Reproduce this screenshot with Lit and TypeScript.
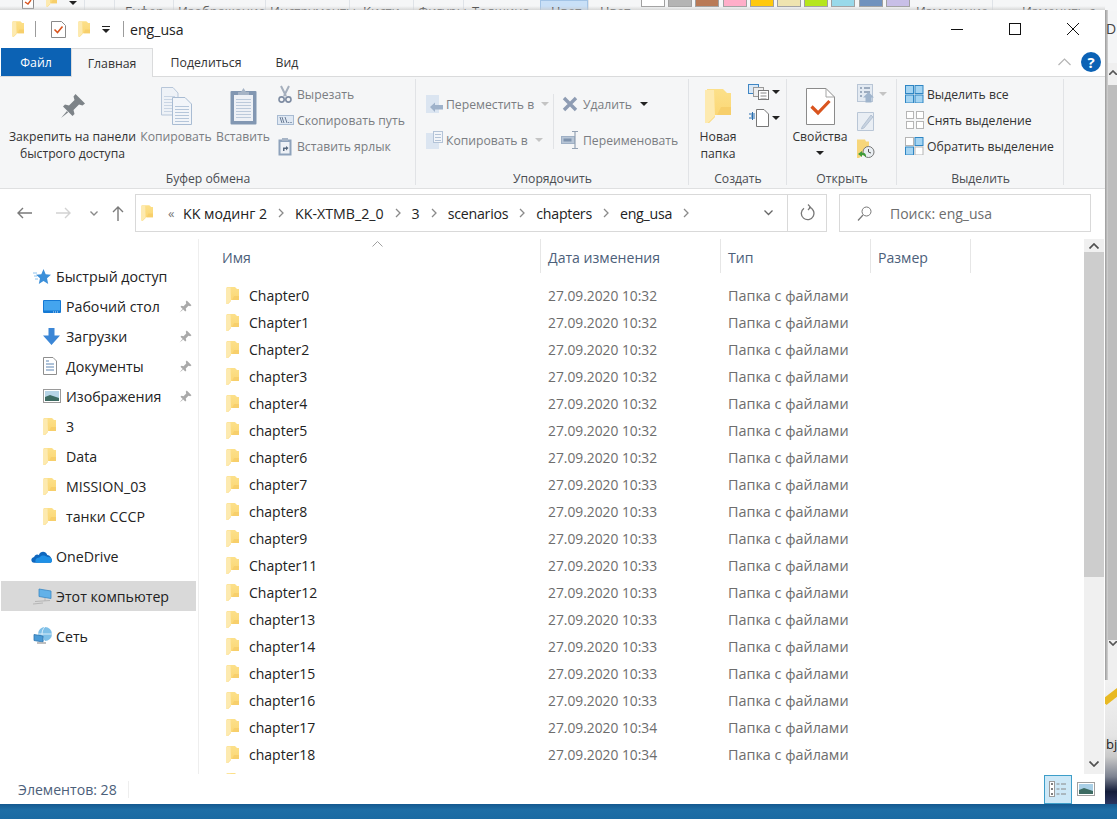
import { LitElement, html, css, svg } from 'lit';
import { customElement } from 'lit/decorators.js';

const names = [
  'Chapter0', 'Chapter1', 'Chapter2', 'chapter3', 'chapter4', 'chapter5', 'chapter6',
  'chapter7', 'chapter8', 'chapter9', 'Chapter11', 'Chapter12', 'chapter13', 'chapter14',
  'chapter15', 'chapter16', 'chapter17', 'chapter18', 'chapter19',
];
const stamp = (i: number) => `27.09.2020 10:${i < 7 ? 32 : i < 16 ? 33 : 34}`;

const swatches = ['#ffffff', '#b4b4b4', '#b97a57', '#ffaec9', '#ffc90e', '#efe4b0', '#b5e61d', '#99d9ea', '#7092be', '#c8bfe7'];
const behind = [
  ['Буфер', 125], ['Изображение', 178], ['Инструменты', 270], ['Кисти', 363], ['Фигуры', 418],
  ['Толщина', 472], ['Цвет', 551], ['Цвет', 600], ['Изменение', 916], ['Изменить с', 1022],
] as [string, number][];

const icon = (w: number, h: number, body: unknown, vb = `0 0 ${w} ${h}`) =>
  html`<svg width=${w} height=${h} viewBox=${vb} fill="none">${body}</svg>`;

const folder = (w = 13, h = 17) => icon(w, h, svg`
  <path d="M1 0H9L11 2H13V13H5V14L2 17H1Z" fill="url(#fold)"/>
  <path d="M0 0.5H4.5L5 13.5L1.5 17H0Z" fill="#fdeab0"/>
  <path d="M8 9H13V13H6Z" fill="#f7cf6b"/>`, '0 0 13 17');

const pin = (w = 26, c = '#7d8388') => icon(w, w, svg`
  <path d="M15.5 1L25 10.5L22.5 12.5L19 11.5L13.5 17L14.5 21L12.5 23L3 13.5L5 11.5L9 12.5L14.5 7L13.5 3.5Z" fill=${c}/>
  <path d="M7 18L1 25L8 19.5Z" fill=${c}/>`, '0 0 26 26');

const chev = (w: number, h: number, d: string, c: string, sw = 1.3) =>
  icon(w, h, svg`<path d=${d} stroke=${c} stroke-width=${sw}/>`);
const crumbSep = chev(6, 10, 'M1 1L5 5L1 9', '#8a8a8a');
const caret = (c = '#222') => icon(8, 4, svg`<path d="M0 0H8L4 4Z" fill=${c}/>`);

const sheetLines = (x: number, y: number, w: number, n: number, c: string) =>
  Array.from({ length: n }, (_, i) => svg`<path d="M${x} ${y + i * 3 + 0.5}H${x + w}" stroke=${c}/>`);

const copyBig = icon(31, 38, svg`
  <path d="M.5.5H12L17 6V28H.5Z" fill="#eef2f7" stroke="#b7c6d9"/>
  ${sheetLines(3, 9, 11, 6, '#c9d5e4')}
  <path d="M11.5 10.5H24L30.5 17V37.5H11.5Z" fill="#f2f5f9" stroke="#a9bcd3"/>
  ${sheetLines(14, 19, 14, 6, '#b5c6da')}`);
const pasteBig = icon(27, 38, svg`
  <rect x=".5" y="4" width="26" height="33.5" rx="1" fill="#8297b2"/>
  <rect x="4" y="8" width="19" height="26" fill="#eef1f6"/>
  ${sheetLines(6, 12, 15, 7, '#bccadb')}
  <path d="M8 8V5H11L13.5 1L16 5H19V8Z" fill="#a6b4c6"/>`);
const scissors = icon(14, 19, svg`
  <path d="M3 1L8 11M11 1L6 11" stroke="#a5afbd" stroke-width="2"/>
  <circle cx="3.6" cy="14.5" r="2.6" stroke="#7f8da3" stroke-width="1.6"/>
  <circle cx="10.4" cy="14.5" r="2.6" stroke="#7f8da3" stroke-width="1.6"/>`);
const copyPath = icon(17, 10, svg`
  <rect x=".5" y=".5" width="16" height="9" fill="#dfe8f3" stroke="#a8bbd2"/>
  <path d="M3 2L5 8M5 2L7 8M8 2L10 8" stroke="#5c6f8a" stroke-width=".9"/>
  <path d="M11 7.5H11.8M12.8 7.5H13.6M14.4 7.5H15" stroke="#5c6f8a"/>`);
const pasteLink = icon(14, 19, svg`
  <rect x=".5" y="2.5" width="13" height="16" fill="#8ea2bb"/>
  <rect x="2.5" y="5" width="9" height="11.5" fill="#eef1f6"/>
  <path d="M4 1H10V4H4Z" fill="#a6b4c6"/>
  <path d="M5 14V10.5H8V9L10.5 11L8 13.5V12H6.5V14Z" fill="#56687f"/>`);
const moveTo = icon(17, 18, svg`
  <rect width="13" height="18" fill="#dbe5f1"/>
  <path d="M4 12L9 7.5V10H17V14.5H9V17Z" fill="#9fb2ca"/>`);
const copyTo = icon(17, 18, svg`
  <rect y="2" width="13" height="16" fill="#dbe5f1"/>
  <rect x="7.5" y=".5" width="9" height="11" fill="#f2f5f9" stroke="#b3c3d7"/>
  ${sheetLines(9, 3, 6, 3, '#b3c3d7')}`);
const del = icon(16, 16, svg`<path d="M2 2L14 14M14 2L2 14" stroke="#8e9cb3" stroke-width="3.4"/>`);
const rename = icon(18, 18, svg`
  <rect x=".5" y="5.5" width="13" height="7" fill="#b7c5d6" stroke="#9fb0c5"/>
  <rect x="2.5" y="7.5" width="8" height="3" fill="#7f93ad"/>
  <path d="M11 .5H17M14 .5V17.5M11 17.5H17" stroke="#94a2b4" stroke-width="1.2"/>`);
const newItem = icon(22, 16, svg`
  <rect x=".5" y=".5" width="10" height="9" fill="#d9e8f6" stroke="#3f86c4"/>
  <rect x="5.5" y="3.5" width="10" height="9" fill="#eee" stroke="#9a9a9a"/>
  <rect x="10.5" y="6.5" width="10" height="9" fill="#fff" stroke="#777"/>
  ${sheetLines(12.5, 8.5, 6, 3, '#888')}`);
const easyAccess = icon(22, 18, svg`
  <path d="M8.5 .5H16L20.5 5V17.5H8.5Z" fill="#fff" stroke="#777"/>
  <path d="M1 5H7M3 7H7M1 9H7" stroke="#2a6fb0" stroke-width="1.1"/>
  <path d="M4.5 3V11" stroke="#2a6fb0"/>`);
const propsBig = icon(29, 37, svg`
  <path d="M.5.5H20L28.5 9V36.5H.5Z" fill="#fff" stroke="#8b8b8b"/>
  <path d="M20 .5V9H28.5" stroke="#a5a5a5"/>
  <path d="M5.5 18.5L12 25L23.5 13" stroke="#d9541e" stroke-width="3.2"/>`);
const openIcon = icon(17, 19, svg`
  <rect x=".5" y=".5" width="15" height="17" fill="#e3eaf2" stroke="#b9c6d6"/>
  <path d="M3 4H5M7 4H13M3 8H5M7 8H13M3 12H5" stroke="#8798ae" stroke-width="1.6"/>
  <path d="M11.5 8L17 13.5H14.5V18.5H8.5V13.5H6Z" fill="#9fb4cc"/>`);
const editIcon = icon(17, 19, svg`
  <path d="M.5.5H16.5V18.5H.5Z" fill="#e9eef4" stroke="#b9c6d6"/>
  <path d="M5 15L4.5 17L7 16L16 5L14 3Z" fill="#c7d3e1" stroke="#a5b5c8" stroke-width=".7"/>`);
const history = icon(18, 19, svg`
  <path d="M0 .5H8L9 2.5H12V14H6V16L2 19H0Z" fill="#f7d67a"/>
  <circle cx="11.5" cy="13" r="5.5" fill="#e9eef2" stroke="#777"/>
  <path d="M11.5 10V13L14 14" stroke="#555"/>
  <path d="M5 12L1 15L5 18V16C7 16 8 17 9 18.5C9.5 15 8 13.5 5 13.8Z" fill="#3f9b3a"/>`);

const squares = (on: boolean[], big = false) => {
  const s = big ? 8 : 7;
  const g = big ? 1.5 : 3;
  const w = s * 2 + g;
  return icon(w + 1, w + 1, [0, 1, 2, 3].map((i) => {
    const x = (i % 2) * (s + g) + 0.5;
    const y = (i > 1 ? 1 : 0) * (s + g) + 0.5;
    return svg`<rect x=${x} y=${y} width=${s} height=${s} fill=${on[i] ? '#a4d4f2' : '#fff'} stroke=${on[i] ? '#2f86c4' : '#b5b5b5'}/>`;
  }));
};

const navStar = icon(18, 17, svg`
  <path d="M10.5 1L12.7 6.2L18 6.7L14 10.3L15.2 16L10.5 13L5.8 16L7 10.3L3 6.7L8.3 6.2Z" fill="#3b8fd9"/>
  <path d="M0 5H4M1 8H4M2 11H5" stroke="#8cc2ee"/>`);
const navDesktop = icon(18, 13, svg`
  <rect width="18" height="13" rx="1" fill="#1579d4"/>
  <rect x="1" y="1" width="16" height="9.5" fill="#44a5ee"/>
  <path d="M10 12H16" stroke="#cfe6f8" stroke-dasharray="1 1"/>`);
const navDown = icon(17, 17, svg`<path d="M5.5 0H11.5V7.5H17L8.5 17L0 7.5H5.5Z" fill="#3b86d6"/>`);
const navDoc = icon(14, 18, svg`
  <path d="M.5.5H10L13.5 4V17.5H.5Z" fill="#fff" stroke="#8e8e8e"/>
  <path d="M3 4H6M3 7H11M3 10H11M3 13H11" stroke="#5f86b3"/>`);
const navPic = icon(18, 14, svg`
  <rect x=".5" y=".5" width="17" height="13" fill="#fff" stroke="#9a9a9a"/>
  <rect x="2" y="2" width="14" height="10" fill="#b6d4e6"/>
  <path d="M2 8L7 6L16 9V12H2Z" fill="#3d6b62"/>`);
const navCloud = icon(21, 14, svg`
  <path d="M3 13C0 13 -1 8.5 3 7.5C3.5 5 6 4.5 7.5 5.5C9 1.5 14 1.5 15.5 5.5C18 5.5 20 9 20 10.5C20 12 19 13 18 13Z" fill="#0f67be"/>
  <path d="M5 13C3 11 5 8 8 8C9.5 5.5 13 5.5 15.5 7.5C18 7 20 9 20 10.5C20 12 19 13 18 13Z" fill="#1e90e6"/>`, '0 0 20 13');
const navPc = icon(20, 17, svg`
  <path d="M6 1L18 3V10.5L6 8.5Z" fill="#62b1e8" stroke="#3a88c4" stroke-width=".8"/>
  <path d="M12 10V13M2 13.5L17 12.5M0 16L10 15" stroke="#b5b5b5"/>`);
const navNet = icon(20, 19, svg`
  <circle cx="12" cy="7" r="7" fill="#7fc0e8"/>
  <path d="M12 0C8 3 8 11 12 14M5 7H19" stroke="#dbeefa"/>
  <path d="M1 7.5L10 9V15L1 13.5Z" fill="#4a9ad6" stroke="#2f75ad" stroke-width=".8"/>
  <path d="M4 16H13" stroke="#a5a5a5" stroke-width="1.4"/>`);

const places: [unknown, string, boolean][] = [
  [navDesktop, 'Рабочий стол', true],
  [navDown, 'Загрузки', true],
  [navDoc, 'Документы', true],
  [navPic, 'Изображения', true],
  [folder(), '3', false],
  [folder(), 'Data', false],
  [folder(), 'MISSION_03', false],
  [folder(), 'танки СССР', false],
];

@customElement('app-root')
export class AppRoot extends LitElement {
  static styles = css`
    :host {
      display: block;
      position: relative;
      width: 1117px;
      height: 819px;
      overflow: hidden;
      background: #f4f5f6;
      font-family: 'Open Sans', 'Noto Sans', sans-serif;
      color: #1e1e1e;
    }
    svg { display: block; flex: none; }

    /* desktop behind the window */
    .paint-top { position: absolute; left: 0; top: 0; width: 1117px; height: 11px; overflow: hidden; background: #f5f6f7; }
    .paint-label { position: absolute; top: 3px; font-size: 13px; line-height: 16px; color: #333; white-space: nowrap; }
    .paint-active { position: absolute; left: 540px; top: 0; width: 48px; height: 11px; background: #c9e0f7; border: 1px solid #a3c4e6; box-sizing: border-box; }
    .swatch { position: absolute; top: -1px; width: 24px; height: 8px; border: 1px solid #a0a0a0; box-sizing: border-box; }
    .paint-tick { position: absolute; top: 0; width: 1px; height: 11px; background: #dfe3e8; }
    .behind-doc { position: absolute; left: 22px; top: -5px; }
    .behind-folder { position: absolute; left: 46px; top: -8px; }
    .behind-caret { position: absolute; left: 69px; top: 1px; }
    .shadow-top { position: absolute; left: 0; top: 6px; width: 1105px; height: 4px; background: linear-gradient(#f5f6f700, #c9c9c9aa); }
    .shadow-right { position: absolute; left: 1105px; top: 10px; width: 3px; height: 794px; background: linear-gradient(90deg, #9a9a9a, #d4d4d4); }
    .back-letter { position: absolute; left: 1106px; top: 20px; font-size: 14px; line-height: 18px; color: #444; }
    .back-bar { position: absolute; left: 1108px; top: 63px; width: 9px; height: 617px; background: #efefef; }
    .back-thumb { position: absolute; left: 0; top: 22px; width: 9px; height: 555px; background: #bdbdbd; }
    .back-up { position: absolute; left: 1px; top: 7px; }
    .back-down { position: absolute; left: 1px; top: 578px; }
    .back-photo { position: absolute; left: 1105px; top: 680px; width: 12px; height: 124px; background: linear-gradient(#f2f2f2 0, #e4e4e4 45%, #c9c9c9 62%, #7c8290 78%, #141d3a 90%, #2a3560 100%); overflow: hidden; }
    .pencil { position: absolute; left: -3px; top: 12px; width: 22px; height: 7px; background: #e8b923; transform: rotate(-38deg); }
    .back-text { position: absolute; left: 1px; top: 56px; font-size: 13px; line-height: 16px; color: #222; }
    .taskbar { position: absolute; left: 0; top: 804px; width: 1117px; height: 15px; background: linear-gradient(#15598f, #1e6ea6 40%, #1b6aa3); }

    .window { position: absolute; left: 0; top: 10px; width: 1105px; height: 794px; background: #fff; display: flex; flex-direction: column; }

    .titlebar { height: 38px; display: flex; align-items: center; flex: none; }
    .tb-first { margin-left: 12px; }
    .tb-sep { width: 1px; height: 16px; background: #9c9c9c; }
    .tb-sep.a { margin: 0 15px 0 11px; }
    .tb-sep.b { margin: 0 7px 0 13px; }
    .tb-folder { margin-left: 12px; }
    .tb-caret { margin-left: 12px; display: flex; flex-direction: column; gap: 2px; }
    .tb-dash { width: 8px; height: 1px; background: #222; }
    .title { font-size: 14.1px; color: #222; flex: 1; margin-left: -1px; }
    .win-btn { width: 58px; height: 38px; display: flex; align-items: center; justify-content: center; }
    .win-btns { display: flex; margin-right: 3px; }

    .tabs { height: 28px; display: flex; flex: none; font-size: 12.3px; position: relative; }
    .tab { display: flex; align-items: center; justify-content: center; color: #333; box-sizing: border-box; }
    .tab.file { width: 70px; margin-left: 1px; background: #0c62b4; color: #fff; }
    .tab.home { width: 82px; height: 29px; background: #f5f6f7; border: 1px solid #dadbdc; border-bottom: none; position: relative; z-index: 1; }
    .tab.share { width: 106px; }
    .tab.view { width: 56px; }
    .tab-tools { margin-left: auto; display: flex; align-items: center; gap: 10px; margin-right: 4px; }
    .help { width: 20px; height: 20px; border-radius: 50%; background: #0b62b5; color: #fff; font-size: 15px; font-weight: 700; display: flex; align-items: center; justify-content: center; line-height: 1; }

    .ribbon { height: 113px; flex: none; box-sizing: border-box; background: #f5f6f7; border-top: 1px solid #dadbdc; border-bottom: 1px solid #dfe0e1; display: flex; font-size: 12.2px; color: #7a7d82; }
    .group { display: flex; flex-direction: column; box-sizing: border-box; position: relative; }
    .group::after { content: ''; position: absolute; right: 0; top: 2px; bottom: 3px; width: 1px; background: #e1e3e6; }
    .g-clip { width: 416px; }
    .g-org { width: 273px; }
    .g-new { width: 98px; }
    .g-open { width: 110px; }
    .g-sel { width: 167px; }
    .g-body { flex: 1; display: flex; min-height: 0; }
    .g-label { height: 22px; line-height: 26px; text-align: center; color: #4a4d52; flex: none; }
    .big { display: flex; flex-direction: column; align-items: center; padding-top: 7px; text-align: center; line-height: 17px; white-space: nowrap; }
    .big-icon { height: 44px; display: flex; align-items: center; justify-content: center; }
    .dark { color: #333; }
    .small-col { display: flex; flex-direction: column; padding-top: 4px; }
    .small { height: 26px; display: flex; align-items: center; white-space: nowrap; }
    .small .ic { width: 21px; display: flex; justify-content: center; flex: none; }

    .g-clip .g-body { padding-left: 10px; }
    .b-pin { width: 125px; }
    .b-copy { width: 72px; margin-left: 5px; }
    .b-paste { width: 52px; margin-left: 5px; }
    .g-clip .small-col { margin-left: 7px; }
    .g-clip .small .ic { width: 18px; margin-right: 3px; }

    .g-org .g-body { padding-left: 10px; }
    .org-col { display: flex; flex-direction: column; padding-top: 9px; }
    .org-col .small { height: 36px; gap: 3px; }
    .org-a { width: 127px; }
    .org-a .caret { margin-left: 4px; }
    .org-div { width: 1px; height: 55px; background: #e1e3e6; margin-top: 17px; }
    .org-b { margin-left: 8px; }
    .org-b .small { gap: 5px; }
    .org-b .caret { margin-left: 3px; }
    .rename-ic { margin-right: -1px; margin-left: -1px; }

    .g-new .g-body { padding-left: 3px; }
    .b-new { width: 52px; color: #333; }
    .new-col { margin-left: 4px; display: flex; flex-direction: column; padding-top: 2px; }
    .new-row { height: 26px; display: flex; align-items: center; gap: 2px; }
    .g-open .g-body { padding-left: 5px; }
    .b-props { width: 56px; color: #333; }
    .b-props .caret { margin-top: 6px; }
    .open-col { margin-left: 9px; padding-top: 3px; display: flex; flex-direction: column; }
    .open-row { height: 27.5px; display: flex; align-items: center; gap: 5px; }
    .g-sel .small-col { padding-left: 8px; }
    .g-sel .small { color: #333; }
    .g-sel .small .ic { width: 19px; margin-right: 3px; }

    .address { height: 50px; flex: none; display: flex; align-items: flex-start; padding-top: 5px; box-sizing: border-box; }
    .nav { width: 135px; height: 38px; display: flex; align-items: center; flex: none; }
    .nav-back { margin-left: 17px; }
    .nav-fwd { margin-left: 24px; }
    .nav-more { margin-left: 19px; }
    .nav-up { margin-left: 14px; }
    .path { width: 692px; height: 38px; box-sizing: border-box; border: 1px solid #d9d9d9; display: flex; align-items: center; flex: none; font-size: 14.2px; color: #222; }
    .path-folder { margin-left: 5px; }
    .path-more { margin-left: 15px; width: 15px; color: #777; font-size: 13px; line-height: 14px; }
    .crumb { white-space: nowrap; }
    .crumb.tight { letter-spacing: -0.25px; }
    .crumb-sep { width: 28px; display: flex; justify-content: center; flex: none; }
    .path-drop { margin-left: auto; width: 38px; display: flex; justify-content: center; }
    .path-refresh { width: 38px; height: 36px; border-left: 1px solid #d9d9d9; display: flex; align-items: center; justify-content: center; }
    .search { margin-left: 12px; width: 252px; height: 38px; box-sizing: border-box; border: 1px solid #d9d9d9; display: flex; align-items: center; font-size: 14px; color: #6d6d6d; }
    .search svg { margin-left: 17px; margin-right: 18px; }

    .main { flex: 1; display: flex; min-height: 0; }
    .side { width: 199px; flex: none; box-sizing: border-box; border-right: 1px solid #eeeeee; padding-top: 22px; font-size: 14.2px; color: #222; }
    .place { height: 30px; display: flex; align-items: center; margin-left: 1px; width: 195px; }
    .place .ic { width: 55px; padding-left: 32px; box-sizing: border-box; display: flex; flex: none; }
    .place.sub .ic { width: 65px; padding-left: 42px; }
    .place .ic.cloud { padding-left: 30px; }
    .place .txt { flex: 1; }
    .place.gap { margin-top: 10px; }
    .place.sel { background: #d9d9d9; }
    .place .pin { margin-right: 4px; }

    .files { flex: 1; min-width: 0; overflow: hidden; }
    .head { height: 34px; display: flex; padding-left: 15px; font-size: 14.1px; color: #4c607a; position: relative; }
    .hcell { box-sizing: border-box; border-right: 1px solid #e6e6e6; display: flex; align-items: center; padding-left: 7px; padding-top: 2px; }
    .hcell.n { width: 327px; padding-left: 8px; }
    .hcell.d { width: 180px; }
    .hcell.t { width: 150px; }
    .hcell.s { width: 100px; }
    .sort { position: absolute; left: 173px; top: 2px; }
    .rows { padding-top: 9px; font-size: 14px; }
    .row { height: 27px; display: grid; grid-template-columns: 23px 299px 180px 1fr; align-items: center; padding-left: 27px; }
    .row .name { color: #222; }
    .row .date { color: #6d6d6d; font-size: 13.8px; }
    .row .type { color: #6d6d6d; font-size: 14.4px; }

    .scroll { width: 20px; margin-right: 1px; flex: none; background: #f0f0f0; display: flex; flex-direction: column; }
    .sc-btn { height: 13px; display: flex; align-items: center; justify-content: center; flex: none; }
    .sc-btn.down { height: 20px; margin-top: auto; }
    .thumb { height: 325px; background: #cdcdcd; flex: none; }

    .status { height: 30px; flex: none; display: flex; align-items: center; font-size: 14.1px; color: #4c607a; padding-left: 18px; }
    .st-sep { width: 1px; height: 17px; background: #eeeeee; margin-left: 11px; }
    .views { margin-left: auto; display: flex; margin-right: 5px; align-items: center; }
    .view { width: 28px; height: 29px; box-sizing: border-box; display: flex; align-items: center; justify-content: center; }
    .view.on { background: #cde8f7; border: 1px solid #3d9ec9; }
  `;

  private paintBehind() {
    return html`
      <div class="paint-top">
        <div class="behind-doc">${icon(12, 14, svg`<rect x=".5" y=".5" width="11" height="13" fill="#fff" stroke="#888"/><path d="M3 7L6 9L9 5" stroke="#d9541e" stroke-width="1.4"/>`)}</div>
        <div class="behind-folder">${folder(11, 15)}</div>
        <div class="behind-caret">${caret()}</div>
        <div class="paint-tick" style="left:84px"></div>
        <div class="paint-active"></div>
        ${[114, 173, 265, 349, 413, 463, 588, 992].map((x) => html`<div class="paint-tick" style="left:${x}px"></div>`)}
        ${behind.map(([t, x]) => html`<div class="paint-label" style="left:${x}px">${t}</div>`)}
        ${swatches.map((c, i) => html`<div class="swatch" style="left:${641 + i * 27.2}px;background:${c}"></div>`)}
      </div>
      <div class="shadow-top"></div>
      <div class="shadow-right"></div>
      <div class="back-letter">D</div>
      <div class="back-bar">
        <div class="back-up">${chev(8, 5, 'M0 5L4 1L8 5', '#555', 1.6)}</div>
        <div class="back-thumb"></div>
        <div class="back-down">${chev(8, 5, 'M0 0L4 4L8 0', '#555', 1.6)}</div>
      </div>
      <div class="back-photo"><div class="pencil"></div><div class="back-text">bj</div></div>
      <div class="taskbar"></div>
    `;
  }

  private titlebar() {
    return html`
      <div class="titlebar">
        <div class="tb-first">${folder(12, 16)}</div>
        <div class="tb-sep a"></div>
        ${icon(15, 17, svg`<path d="M.5.5H10.5L14.5 4.5V16.5H.5Z" fill="#fff" stroke="#8a8a8a"/><path d="M3.5 8.5L6.5 11.5L11.5 5.5" stroke="#d9541e" stroke-width="1.6"/>`)}
        <div class="tb-folder">${folder(12, 16)}</div>
        <div class="tb-caret"><div class="tb-dash"></div>${caret()}</div>
        <div class="tb-sep b"></div>
        <div class="title">eng_usa</div>
        <div class="win-btns">
          <div class="win-btn">${icon(12, 1, svg`<path d="M0 .5H12" stroke="#111"/>`)}</div>
          <div class="win-btn">${icon(12, 12, svg`<rect x=".5" y=".5" width="11" height="11" stroke="#111"/>`)}</div>
          <div class="win-btn">${icon(12, 12, svg`<path d="M0 0L12 12M12 0L0 12" stroke="#111"/>`)}</div>
        </div>
      </div>
    `;
  }

  private tabs() {
    return html`
      <div class="tabs">
        <div class="tab file">Файл</div>
        <div class="tab home">Главная</div>
        <div class="tab share">Поделиться</div>
        <div class="tab view">Вид</div>
        <div class="tab-tools">
          ${chev(13, 8, 'M.5 7L6.5 1L12.5 7', '#b4b4b4', 1.2)}
          <div class="help">?</div>
        </div>
      </div>
    `;
  }

  private ribbon() {
    return html`
      <div class="ribbon">
        <div class="group g-clip">
          <div class="g-body">
            <div class="big b-pin dark"><div class="big-icon">${pin()}</div>Закрепить на панели<br />быстрого доступа</div>
            <div class="big b-copy"><div class="big-icon">${copyBig}</div>Копировать</div>
            <div class="big b-paste"><div class="big-icon">${pasteBig}</div>Вставить</div>
            <div class="small-col">
              <div class="small"><span class="ic">${scissors}</span>Вырезать</div>
              <div class="small"><span class="ic">${copyPath}</span>Скопировать путь</div>
              <div class="small"><span class="ic">${pasteLink}</span>Вставить ярлык</div>
            </div>
          </div>
          <div class="g-label">Буфер обмена</div>
        </div>
        <div class="group g-org">
          <div class="g-body">
            <div class="org-col org-a">
              <div class="small">${moveTo}Переместить в<span class="caret">${caret('#c4c4c4')}</span></div>
              <div class="small">${copyTo}Копировать в<span class="caret">${caret('#c4c4c4')}</span></div>
            </div>
            <div class="org-div"></div>
            <div class="org-col org-b">
              <div class="small">${del}<span>Удалить</span><span class="caret">${caret()}</span></div>
              <div class="small"><span class="rename-ic">${rename}</span>Переименовать</div>
            </div>
          </div>
          <div class="g-label">Упорядочить</div>
        </div>
        <div class="group g-new">
          <div class="g-body">
            <div class="big b-new"><div class="big-icon">${folder(26, 36)}</div>Новая<br />папка</div>
            <div class="new-col">
              <div class="new-row">${newItem}${caret()}</div>
              <div class="new-row">${easyAccess}${caret()}</div>
            </div>
          </div>
          <div class="g-label">Создать</div>
        </div>
        <div class="group g-open">
          <div class="g-body">
            <div class="big b-props"><div class="big-icon">${propsBig}</div>Свойства<span class="caret">${caret()}</span></div>
            <div class="open-col">
              <div class="open-row">${openIcon}${caret('#c4c4c4')}</div>
              <div class="open-row">${editIcon}</div>
              <div class="open-row">${history}</div>
            </div>
          </div>
          <div class="g-label">Открыть</div>
        </div>
        <div class="group g-sel">
          <div class="g-body">
            <div class="small-col">
              <div class="small"><span class="ic">${squares([true, true, true, true], true)}</span>Выделить все</div>
              <div class="small"><span class="ic">${squares([false, false, false, false])}</span>Снять выделение</div>
              <div class="small"><span class="ic">${squares([false, true, true, false], true)}</span>Обратить выделение</div>
            </div>
          </div>
          <div class="g-label">Выделить</div>
        </div>
      </div>
    `;
  }

  private address() {
    const crumbs = ['KK модинг 2', 'KK-XTMB_2_0', '3', 'scenarios', 'chapters', 'eng_usa'];
    return html`
      <div class="address">
        <div class="nav">
          <div class="nav-back">${icon(15, 12, svg`<path d="M15 6H1M6 1L1 6L6 11" stroke="#7a7a7a" stroke-width="1.4"/>`)}</div>
          <div class="nav-fwd">${icon(15, 12, svg`<path d="M0 6H14M9 1L14 6L9 11" stroke="#d2d2d2" stroke-width="1.4"/>`)}</div>
          <div class="nav-more">${chev(8, 5, 'M.5.5L4 4L7.5.5', '#8a8a8a', 1.4)}</div>
          <div class="nav-up">${icon(12, 15, svg`<path d="M6 15V1M1 6L6 1L11 6" stroke="#7a7a7a" stroke-width="1.4"/>`)}</div>
        </div>
        <div class="path">
          <div class="path-folder">${folder(12, 16)}</div>
          <div class="path-more">«</div>
          ${crumbs.map((c, i) => html`<span class="crumb ${i > 2 ? 'tight' : ''}">${c}</span><span class="crumb-sep">${crumbSep}</span>`)}
          <div class="path-drop">${chev(9, 6, 'M.5.5L4.5 4.5L8.5.5', '#666', 1.3)}</div>
          <div class="path-refresh">${icon(15, 18, svg`<path d="M9 3.2A6.3 6.3 0 1 1 4 4.2" stroke="#777" stroke-width="1.3"/><path d="M8 .5L10.5 3.2L8 6" stroke="#777" stroke-width="1.2"/>`)}</div>
        </div>
        <div class="search">
          ${icon(15, 15, svg`<circle cx="9.5" cy="5.5" r="4.5" stroke="#777"/><path d="M6 9L1 14.5" stroke="#777" stroke-width="1.2"/>`)}
          Поиск: eng_usa
        </div>
      </div>
    `;
  }

  private sidebar() {
    return html`
      <div class="side">
        <div class="place"><span class="ic">${navStar}</span><span class="txt">Быстрый доступ</span></div>
        ${places.map(([ic, label, pinned]) => html`
          <div class="place sub"><span class="ic">${ic}</span><span class="txt">${label}</span>${pinned ? html`<span class="pin">${pin(13, '#a9a9a9')}</span>` : ''}</div>
        `)}
        <div class="place gap"><span class="ic cloud">${navCloud}</span><span class="txt">OneDrive</span></div>
        <div class="place gap sel"><span class="ic">${navPc}</span><span class="txt">Этот компьютер</span></div>
        <div class="place gap"><span class="ic">${navNet}</span><span class="txt">Сеть</span></div>
      </div>
    `;
  }

  private fileList() {
    return html`
      <div class="files">
        <div class="head">
          <div class="hcell n">Имя</div>
          <div class="hcell d">Дата изменения</div>
          <div class="hcell t">Тип</div>
          <div class="hcell s">Размер</div>
          <div class="sort">${chev(11, 6, 'M.5 5.5L5.5 .5L10.5 5.5', '#a0a0a0', 1)}</div>
        </div>
        <div class="rows">
          ${names.map((n, i) => html`
            <div class="row">
              ${folder()}
              <span class="name">${n}</span>
              <span class="date">${stamp(i)}</span>
              <span class="type">Папка с файлами</span>
            </div>
          `)}
        </div>
      </div>
    `;
  }

  render() {
    return html`
      <svg width="0" height="0" style="position:absolute">
        <defs>
          <linearGradient id="fold" x1="0" y1="0" x2="0" y2="1">
            <stop offset="0" stop-color="#fce08a" />
            <stop offset="1" stop-color="#fbd56f" />
          </linearGradient>
        </defs>
      </svg>
      ${this.paintBehind()}
      <div class="window">
        ${this.titlebar()} ${this.tabs()} ${this.ribbon()} ${this.address()}
        <div class="main">
          ${this.sidebar()} ${this.fileList()}
          <div class="scroll">
            <div class="sc-btn">${chev(10, 6, 'M.5 5.5L5 1L9.5 5.5', '#505050', 1.7)}</div>
            <div class="thumb"></div>
            <div class="sc-btn down">${chev(10, 6, 'M.5.5L5 5L9.5.5', '#505050', 1.7)}</div>
          </div>
        </div>
        <div class="status">
          Элементов: 28<div class="st-sep"></div>
          <div class="views">
            <div class="view on">${icon(18, 16, svg`
              <rect x=".5" y=".5" width="5" height="15" fill="#fff" stroke="#9a9a9a"/>
              <path d="M2 3H4M2 8H4M2 13H4" stroke="#555" stroke-width="1.4"/>
              <path d="M7.5 3H10.5M12 3H17M7.5 8H10.5M12 8H17M7.5 13H10.5M12 13H17" stroke="#888"/>`)}</div>
            <div class="view">${icon(18, 14, svg`
              <rect x=".5" y=".5" width="17" height="13" fill="#fff" stroke="#a0a0a0"/>
              <rect x="2" y="2" width="14" height="10" fill="#a9cfe6"/>
              <path d="M2 8L7 6L16 9V12H2Z" fill="#3d6b62"/>`)}</div>
          </div>
        </div>
      </div>
    `;
  }
}

declare global {
  interface HTMLElementTagNameMap {
    'app-root': AppRoot;
  }
}
